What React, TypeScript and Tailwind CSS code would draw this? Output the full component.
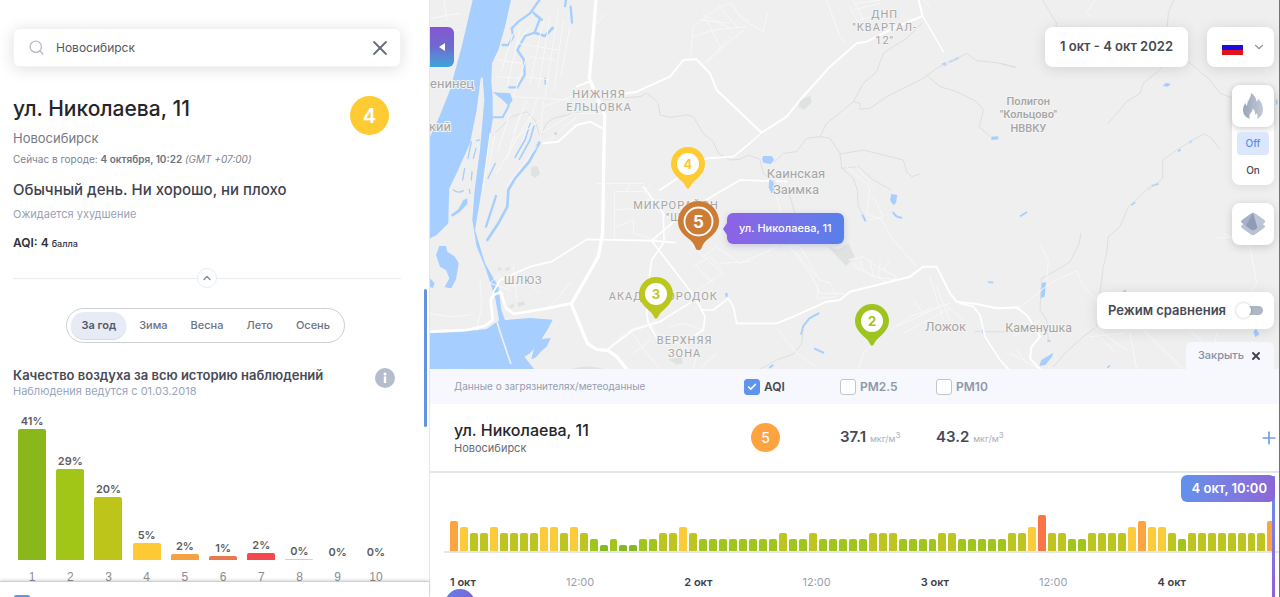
import React, { useState } from 'react';
import { Check, ChevronDown, ChevronUp, Plus, Search, X } from 'lucide-react';

const SEASONS = ['За год', 'Зима', 'Весна', 'Лето', 'Осень'];

const HISTORY = [
  { label: '41%', height: 131, color: 'bg-[#8ab81a]' },
  { label: '29%', height: 91, color: 'bg-[#a1c617]' },
  { label: '20%', height: 63, color: 'bg-[#bdc51a]' },
  { label: '5%', height: 17, color: 'bg-[#fdca36]' },
  { label: '2%', height: 6, color: 'bg-[#f6a244]' },
  { label: '1%', height: 4, color: 'bg-[#e87a50]' },
  { label: '2%', height: 7, color: 'bg-[#f2484e]' },
  { label: '0%', height: 1, color: 'bg-[#e0c4d0]' },
  { label: '0%', height: 0, color: 'bg-transparent' },
  { label: '0%', height: 0, color: 'bg-transparent' },
];

// hourly AQI, 1 окт 00:00 - 4 окт 10:00
const HOURLY = [
  5, 4, 3, 3, 4, 3, 3, 3, 3, 4, 4, 3, 4, 3, 2, 1, 2, 1, 1, 2, 2, 3, 3, 4,
  3, 2, 2, 2, 2, 2, 2, 2, 2, 3, 2, 2, 3, 2, 2, 2, 2, 2, 3, 3, 3, 2, 2, 2,
  2, 3, 3, 2, 2, 2, 2, 2, 3, 3, 4, 6, 3, 3, 2, 2, 3, 3, 3, 3, 4, 5, 4, 4,
  3, 2, 3, 3, 3, 3, 3, 3, 3, 3, 5,
];

const LEVELS: Record<number, string> = {
  1: 'h-[6px] bg-[#86b81f]',
  2: 'h-[12px] bg-[#a0c51c]',
  3: 'h-[18px] bg-[#bec520]',
  4: 'h-[24px] bg-[#fccb3a]',
  5: 'h-[30px] bg-[#fba441]',
  6: 'h-[36px] bg-[#f97548]',
};

const TIMES = ['1 окт', '12:00', '2 окт', '12:00', '3 окт', '12:00', '4 окт'];

const MapCanvas: React.FC = () => (
  <svg
    className="absolute inset-0 h-full w-full"
    viewBox="0 0 2547 1107"
    preserveAspectRatio="xMinYMin slice"
    fill="none"
    strokeLinecap="round"
    strokeLinejoin="round"
    aria-hidden="true"
  >
    {/* rivers and reservoir */}
    <g fill="#a6ceff">
      <path d="M128 0L243 0L225 80L205 150L186 190L184 245L188 290L188 360L172 450L155 570L135 690L165 790L205 860L214 930L232 980L210 975L195 890L165 800L140 740L127 660L134 570L150 450L163 300L158 232L152 235L140 330L120 430L80 520L58 565L56 620L55 670L20 705L0 715L0 410L28 350L60 270L95 140Z" />
      <path d="M0 1000L90 996L170 987L205 962L300 954L368 959L355 985L328 1028L300 1060L283 1070L312 1107L0 1107Z" />
      <path d="M330 1018L362 1014L350 1040L332 1055L318 1072L304 1078L312 1045Z" />
      <path d="M62 645L85 628L100 600L112 595L112 612L90 635L68 650Z" />
      <path d="M28 738L48 738L52 755L75 770L86 790L78 838L64 865L44 862L58 835L48 810L30 800L18 765Z" />
      <path d="M0 835L14 850L8 865L0 860Z" />
      <path d="M188 277L240 280L248 300L236 318L218 300Z" />
      <path d="M372 398L384 398L378 408Z" />
      <path d="M1000 468L1025 468L1033 480L1022 492L1000 488L996 476Z" />
      <path d="M1018 540L1030 542L1034 575L1024 580L1016 562Z" />
      <path d="M1384 582L1402 585L1398 608L1390 616L1380 600Z" />
      <path d="M1534 192L1545 187L1552 192L1544 199Z" />
      <path d="M1684 410L1704 409L1706 418L1684 420Z" />
      <path d="M1834 850L1848 846L1844 890L1830 895Z" />
      <path d="M1828 1098L1834 1080L1870 1058L1866 1070L1846 1095Z" />
      <path d="M2470 995L2478 985L2488 1003L2476 1012Z" />
      <path d="M2198 258L2208 248L2222 252L2214 260Z" />
      <path d="M885 880L893 878L893 890L887 891Z" />
    </g>
    <g stroke="#a6ceff">
      <path d="M328 0L300 40L265 65L245 85L250 110L235 135L218 135" strokeWidth="7" />
      <path d="M310 38L330 55L314 98L285 108L262 150L282 180L284 225L262 262L238 262" strokeWidth="7" />
      <path d="M314 98L345 108L368 84M318 46L336 60" strokeWidth="8" />
      <path d="M408 0L405 18M422 20L426 68" strokeWidth="7" />
      <path d="M236 318L218 352L190 352" strokeWidth="6" />
      <path d="M328 428L298 485L255 535L235 570L232 620L205 670L172 720" strokeWidth="8" />
      <path d="M345 235L346 252" strokeWidth="5" />
      <path d="M300 370L285 420L255 472M312 378L300 420L268 478" strokeWidth="5" />
      <path d="M124 425L114 475M138 445L130 475M104 505L98 540M126 515L124 540M196 490L174 535M140 422L148 420" strokeWidth="4" />
      <path d="M198 588L168 680" strokeWidth="7" />
      <path d="M70 570Q85 582 100 572M118 568L120 580" strokeWidth="4" />
      <path d="M1560 185L1568 182M1574 179L1584 174" strokeWidth="6" />
      <path d="M1390 638Q1398 652 1414 653M1298 646L1306 662" strokeWidth="6" />
      <path d="M1166 940L1138 955L1120 978L1114 1002M1154 1046L1180 1058M1020 1102L1028 1096" strokeWidth="6" />
      <path d="M1772 648L1790 637M1676 846L1688 848M1658 990L1660 998" strokeWidth="5" />
      <path d="M2168 557L2184 552M2246 453L2250 450M2280 427L2284 423M2106 614L2114 608M2540 300L2540 312" strokeWidth="5" />
      <path d="M2080 878L2086 872M2034 1102L2038 1098M1854 1022L1860 1024" strokeWidth="5" />
    </g>
    <g stroke="#efefef" strokeWidth="5">
      <path d="M196 950L215 1010L242 1090" />
    </g>

    {/* parks */}
    <g fill="#dfe3df">
      <path d="M305 500L322 498L330 522L315 534L302 524Z" />
      <path d="M1110 300L1140 288L1146 306L1122 330L1106 322Z" />
      <path d="M1194 740L1225 748L1255 730L1275 770L1248 798L1222 770Z" />
      <path d="M715 1078L755 1070L758 1090L740 1094Z" />
      <path d="M425 1107Q470 1092 522 1107Z" />
      <path d="M238 915l12-4 3 10-12 4zM262 908l20-4 3 10-20 6zM205 802l10 2-2 8-10-2zM225 805l14-4 2 6-12 6z" />
    </g>

    {/* creeks */}
    <g stroke="#dddfdf" strokeWidth="3">
      <path d="M520 300L560 295L630 290L650 280L665 290L685 310L690 345L720 352L770 345L790 350L820 400L850 425L865 460L900 480L930 478L955 465L990 478M1035 485L1060 460L1100 455L1130 415L1170 410L1190 370L1240 330L1270 305L1290 310L1290 328L1320 325L1370 290L1420 265L1480 235L1520 205L1570 180L1610 160L1640 182L1700 188L1755 200" />
      <path d="M1270 305L1300 250L1340 215L1360 160L1390 140L1430 115L1475 70" />
      <path d="M1490 225L1530 260L1580 275L1640 305L1660 330L1648 380L1680 410" />
      <path d="M1172 410L1200 415L1230 460L1235 505L1270 535L1282 570L1285 620L1300 645" />
      <path d="M1230 462L1300 450L1360 465L1420 480L1430 515L1445 530L1470 522M1235 505L1285 500L1330 540L1385 570" />
      <path d="M190 405L245 350L290 335L315 360L330 410L350 370L370 355L430 340L480 330" />
      <path d="M1838 0L1880 70L1875 90M2230 0L2215 40L2210 100L2195 205L2140 250L2130 280L2090 305L2035 370M2275 185L2340 240L2370 280L2410 295M1710 190L1755 203" />
      <path d="M2155 570L2198 535L2198 480L2240 450L2280 425L2320 402L2340 410L2370 448" />
      <path d="M2165 555L2095 620L2070 680L2035 710L2030 760L2020 800L2010 880L2000 980L1960 1010L1910 1055L1870 1100" />
      <path d="M1952 700L1948 730L1920 785L1890 805L1835 835L1830 930L1850 960L1855 1020" />
      <path d="M991 1107L1040 1080L1090 1062L1115 1030L1120 985M990 480L1000 520L1080 590L1095 640" />
      <path d="M1635 995L1800 996" />
    </g>

    {/* minor streets */}
    <g stroke="#f8f8f8" strokeWidth="3">
      <path d="M250 100L215 210M270 90L232 255M300 80L262 130M340 60L300 250M360 50L325 265M385 30L345 290M400 60L372 270M420 80L392 230M290 170L250 290M205 180L275 190M200 230L270 235M262 130L385 150M300 170L372 180M290 230L360 240M290 300L250 400M320 300L280 420M340 305L330 420M240 340L205 450M270 345L230 480M300 350L200 520M180 400L160 560M195 400L175 510M320 440L230 560" />
      <path d="M780 180L790 80L870 20L905 10L930 50L955 60M790 110L850 90L950 80M810 60L900 70M830 50L900 85M870 20L920 80M810 200L940 90M830 190L900 110M820 40L870 140M940 60L1000 95L1012 40" />
      <path d="M340 320L420 290L500 290M250 290L420 300M330 400L430 340L510 340M360 420L440 350M250 420L330 360M0 55L90 40M50 60L42 0M8 100L90 90M500 70L530 40" />
      <path d="M554 720L554 575L640 575L690 640L730 660L700 730M554 630L620 625L650 600L700 600M610 660L610 700L680 720M560 680L610 660M640 575L660 555M500 550L640 550M600 550L590 570" />
      <path d="M780 730L820 770L880 820M820 770L860 740M790 800L840 770L870 800M880 820L800 870M850 850L800 800M865 745L930 790L1000 760L1040 740M870 790L960 785" />
      <path d="M560 1020L600 990L650 1060L690 1107M600 990L660 970L680 960M660 970L720 1050M610 1060L660 1020M690 1000L800 1060L790 1107M810 1107L860 1060M720 980L760 970L820 990" />
      <path d="M300 840L200 830L180 850L240 870M250 800L260 900M230 860L300 850L330 880M360 920L420 850M150 840L155 920L140 990M0 940L60 950L120 945" />
      <path d="M1040 590L1080 740L1140 820L1170 880L1240 880M1060 740L1110 740L1170 840M1100 760L1160 830M1170 840L1200 850L1220 890L1160 895L1165 850" />
      <path d="M1256 780L1300 770L1340 800L1400 830L1380 850L1270 800M1270 790L1330 830L1400 840M1290 780L1300 810M1320 780L1330 830M1350 790L1345 830M1380 780L1360 810" />
      <path d="M1380 990L1440 950L1560 910M1400 980L1540 915M1420 1000L1560 925M1450 900L1480 940L1500 920M1520 860L1560 960M1500 830L1540 960M1530 900L1600 960" />
      <path d="M1190 0L1230 110L1250 130M1260 20L1290 80M1270 0L1300 60M1280 10L1350 0M1270 30L1350 10M1290 60L1360 40M1480 0L1500 20" />
      <path d="M1250 500L1320 560L1310 640L1355 660L1390 720L1460 800M1280 500L1330 560M1320 660L1360 650L1330 590" />
      <path d="M1760 930L1860 850L1940 812L1960 860L2000 900M1850 840L1855 780L1832 738M1990 980L2090 1050M2000 1000L2060 1060M1980 1010L2080 1000M2100 1000L2120 1107M2140 990L2260 1107M2270 980L2340 1050M2380 700L2460 740L2480 850L2460 880M2360 715L2420 710M2340 1107L2360 1000M1995 0L1970 40L1985 50" />
      <path d="M1040 985L1100 1060L1160 1100M1285 1107L1300 1060L1320 1040M1750 1010L1830 960M1740 1060L1830 1107M1760 1050L1790 1090" />
    </g>

    {/* roads */}
    <g stroke="#ffffff" strokeWidth="6">
      <path d="M498 0L490 100L478 235L500 290L524 345L520 560L518 700L505 770L424 912L472 1030L500 1048L535 1052L560 1070L590 1107" strokeWidth="10" />
      <path d="M0 995L110 990L165 978L188 960L182 900L190 885L212 876L228 925L252 942L350 925L424 910" strokeWidth="8" />
      <path d="M530 1050L610 990L690 965L700 960M188 880L210 840L300 800L365 785L470 718L665 722L780 872L810 920L825 950L820 990L790 1010" strokeWidth="5" />
      <path d="M665 722L735 728M665 722L760 640L930 540L1015 543M690 570L830 475L910 470L960 430M700 640L702 725M700 640L640 560" strokeWidth="5" />
      <path d="M700 730L665 780L658 830L650 940L655 970L690 1030M690 965L810 890M815 930L850 930L895 895L910 920L920 970L1040 970" strokeWidth="5" />
      <path d="M340 430L385 425L440 375L480 365L518 385M440 260L478 245" />
      <path d="M530 290L620 275L720 230L760 180L800 178L840 220L860 270L960 365L995 398L1070 350L1110 300L1200 200L1280 130L1310 125L1400 80L1478 48L1466 0" />
      <path d="M930 455L995 398M1478 48L1540 155" strokeWidth="4" />
      <path d="M1040 970L1090 950L1190 905L1230 900L1260 875L1440 830L1480 800L1520 800L1560 880L1580 905L1640 912L1700 925L1760 922L1790 945L1810 975L1830 1010L1805 1040L1800 1075L1830 1107" />
      <path d="M1590 910L1630 920L1650 945L1665 1010L1710 1080L1735 1107M1070 545L1040 543M1710 925L1765 922" strokeWidth="5" />
    </g>

    {/* place names */}
    <g
      fill="#a5a5a5"
      stroke="#f4f4f4"
      strokeWidth="6"
      paintOrder="stroke"
      textAnchor="middle"
      fontFamily="Roboto, sans-serif"
      fontSize="33"
    >
      <g letterSpacing="3">
        <text x="507" y="294">НИЖНЯЯ</text>
        <text x="507" y="332">ЕЛЬЦОВКА</text>
        <text x="738" y="626">МИКРОРАЙОН</text>
        <text x="738" y="664">"Щ"</text>
        <text x="280" y="852">ШЛЮЗ</text>
        <text x="700" y="900">АКАДЕМГОРОДОК</text>
        <text x="764" y="1032">ВЕРХНЯЯ</text>
        <text x="764" y="1070">ЗОНА</text>
        <text x="1364" y="55">ДНП</text>
        <text x="1364" y="93">"КВАРТАЛ-</text>
        <text x="1364" y="131">12"</text>
      </g>
      <g fontSize="39">
        <text x="66" y="265">енинец</text>
        <text x="30" y="394">кий</text>
        <text x="1098" y="533">Каинская</text>
        <text x="1098" y="581">Заимка</text>
        <text x="1547" y="993">Ложок</text>
        <text x="1826" y="995" fontSize="37">Каменушка</text>
      </g>
      <g fontSize="33" fontWeight="500">
        <text x="1795" y="314">Полигон</text>
        <text x="1795" y="355">"Кольцово"</text>
        <text x="1795" y="396">НВВКУ</text>
      </g>
    </g>
  </svg>
);

interface PinProps {
  value: number;
  color: string;
  position: string;
}

const Pin: React.FC<PinProps> = ({ value, color, position }) => (
  <button type="button" className={`absolute h-[42px] w-[34px] ${position} ${color}`}>
    <svg viewBox="0 0 34 42" className="absolute inset-0" aria-hidden="true">
      <path fill="currentColor" d="M17 0a17 17 0 0 1 17 17c0 8-6 13-11 17.500-2 1.800-3 3.500-4 5.500-1 2-3 2-4 0s-2-3.700-4-5.500C6 30 0 25 0 17A17 17 0 0 1 17 0Z" />
      <circle cx="17" cy="17" r="11" fill="#fff" />
    </svg>
    <span className="relative -top-1 block text-[13px] leading-[34px] font-bold">{value}</span>
  </button>
);

const SidePanel: React.FC = () => {
  const [season, setSeason] = useState(SEASONS[0]);
  const [query, setQuery] = useState('Новосибирск');

  return (
    <aside className="relative flex w-[430px] shrink-0 flex-col border-r border-[#e3e5ea] bg-white">
      <div className="min-h-0 flex-1 overflow-hidden pt-7 pr-7 pl-[13px]">
        <label className="flex h-[39px] items-center gap-[11px] rounded-md border border-[#f1f3f7] bg-white px-3.5 shadow-[0_2px_16px_rgba(0,0,0,0.13)]">
          <Search className="h-[17px] w-[17px] text-[#b9bdcb]" strokeWidth={2} />
          <input
            aria-label="Город"
            value={query}
            onChange={(e) => setQuery(e.target.value)}
            className="min-w-0 flex-1 text-[12px] text-[#535763] outline-none"
          />
          <button type="button" aria-label="Очистить" onClick={() => setQuery('')}>
            <X className="-mr-1.5 h-6 w-6 text-[#666c7c]" strokeWidth={1.8} />
          </button>
        </label>

        <div className="mt-7 flex items-start justify-between">
          <div>
            <h1 className="text-[21px] leading-7 font-medium text-[#25262a]">ул. Николаева, 11</h1>
            <p className="mt-[5px] text-[13px] leading-5 text-[#747985]">Новосибирск</p>
            <p className="mt-[3px] text-[10px] leading-4 text-[#7d8391]">
              Сейчас в городе: <b className="font-semibold text-[#6b7180]">4 октября, 10:22</b> <i>(GMT +07:00)</i>
            </p>
          </div>
          <span className="mt-px mr-3 flex h-[39px] w-[39px] items-center justify-center rounded-full bg-[#fecb33] text-[20px] font-semibold text-white">
            4
          </span>
        </div>

        <h2 className="mt-[13px] text-[15px] leading-5 font-medium text-[#3f434f]">Обычный день. Ни хорошо, ни плохо</h2>
        <p className="mt-1.5 text-[11px] leading-4 text-[#9aa2b6]">Ожидается ухудшение</p>
        <p className="mt-[13px] text-[12px] leading-4 font-semibold text-[#2f3138]">
          AQI: 4 <span className="text-[9px] font-medium">балла</span>
        </p>

        <div className="mt-4 flex items-center">
          <div className="h-px flex-1 bg-[#e8edf2]" />
          <button type="button" aria-label="Свернуть" className="flex h-5 w-5 items-center justify-center rounded-full border border-[#e8edf2]">
            <ChevronUp className="h-3 w-3 text-[#8b91a2]" strokeWidth={3} />
          </button>
          <div className="h-px flex-1 bg-[#e8edf2]" />
        </div>

        <div className="mt-5 mr-14 ml-auto flex h-[35px] w-fit items-center gap-[3px] rounded-full border border-[#cccfd5] px-1">
          {SEASONS.map((item) => (
            <button
              key={item}
              type="button"
              onClick={() => setSeason(item)}
              className={`h-[27px] rounded-full px-2.5 text-[11px] ${
                item === season ? 'bg-[#e7ebf5] font-semibold text-[#535968] shadow-[0_1px_1px_#d4d8e2]' : 'font-medium text-[#6c7383]'
              }`}
            >
              {item}
            </button>
          ))}
        </div>

        <div className="mt-6 flex items-start justify-between">
          <div>
            <h3 className="text-[13px] leading-4 font-semibold text-[#474b57]">Качество воздуха за всю историю наблюдений</h3>
            <p className="text-[11px] leading-4 text-[#9aa5ba]">Наблюдения ведутся с 01.03.2018</p>
          </div>
          <button type="button" aria-label="Информация" className="mt-px mr-1.5 h-5 w-5 rounded-full bg-[#b5bccb] text-white">
            <svg viewBox="0 0 20 20" fill="currentColor">
              <circle cx="10" cy="6" r="1.500" />
              <path d="M8.800 8.500h2.400V15H8.800Z" />
            </svg>
          </button>
        </div>

        <div className="mt-3.5 mr-1.5 grid grid-cols-10 text-center">
          {HISTORY.map((item, i) => (
            <div key={i}>
              <div className="flex h-[147px] flex-col items-center justify-end text-[11px] leading-4 font-semibold text-[#5b5d63]">
                {item.label}
                <div className={`w-7 rounded-t-xs ${item.color}`} style={{ height: item.height }} />
              </div>
              <div className="mt-[9px] font-['Liberation_Sans',sans-serif] text-[12px] leading-4 text-[#8b8d92]">{i + 1}</div>
            </div>
          ))}
        </div>
      </div>

      <div className="absolute top-[289px] right-[2px] h-[138px] w-[3px] rounded-full bg-[#6493e0]" />

      <div className="relative h-4 shrink-0 overflow-hidden border-t border-[#cfd0d2] bg-white pt-[13px] pl-3.5 shadow-[0_-1px_3px_rgba(0,0,0,0.15)]">
        <input type="checkbox" defaultChecked aria-label="Показывать на карте" className="block h-4 w-4 appearance-none rounded-xs bg-[#5f97e8]" />
      </div>
    </aside>
  );
};

const MapSection: React.FC = () => {
  const [fire, setFire] = useState('Off');

  return (
    <section className="relative min-h-0 flex-1 overflow-hidden bg-[#efefef]">
      <MapCanvas />

      <button
        type="button"
        aria-label="Скрыть панель"
        className="absolute top-[27px] left-0 flex h-10 w-6 items-center justify-center rounded-r-md bg-linear-to-b from-[#8655d2] via-[#6a6bd0] to-[#35a5d8]"
      >
        <svg viewBox="0 0 8 10" className="h-2.5 w-2 fill-white">
          <path d="M7 1v8L1 5Z" />
        </svg>
      </button>

      <Pin value={4} color="text-[#fecb33]" position="top-[147px] left-[241px]" />
      <Pin value={3} color="text-[#bcc71d]" position="top-[277px] left-[209px]" />
      <Pin value={2} color="text-[#9fc420]" position="top-[304px] left-[425px]" />
      <button type="button" className="absolute top-[201px] left-[248px] h-[50px] w-[41px]">
        <svg viewBox="0 0 41 50" className="absolute inset-0" aria-hidden="true">
          <path fill="#cd7c35" d="M20.500 0A20.500 20.500 0 0 1 41 20.500c0 8-5 13-11 17.500-3.500 2.500-5 5-6.500 9-1 3-5 3-6 0-1.500-4-3-6.500-6.500-9C5 33.500 0 28.500 0 20.500A20.500 20.500 0 0 1 20.500 0Z" />
          <circle cx="20.500" cy="20.500" r="14" fill="none" stroke="#fff" strokeWidth="1.800" />
        </svg>
        <span className="relative -top-1 block text-[17px] leading-[41px] font-bold text-white">5</span>
      </button>
      <div className="absolute top-[213px] left-[297px] flex h-[31px] items-center rounded-md bg-linear-to-r from-[#8c62e6] to-[#5680e9] px-3 text-[11px] font-medium text-white shadow-[0_2px_6px_rgba(80,90,180,0.25)]">
        <svg viewBox="0 0 4 12" className="absolute top-2.5 -left-1 h-3 w-1 fill-[#8c62e6]">
          <path d="M4 0v12L0 6Z" />
        </svg>
        ул. Николаева, 11
      </div>

      <div className="absolute top-[27px] right-[5px] flex flex-col items-end">
        <div className="flex gap-[19px]">
          <button type="button" className="h-10 rounded-lg bg-white px-[15px] text-[13px] font-semibold text-[#474a55] shadow-[0_2px_14px_rgba(0,0,0,0.12)]">
            1 окт - 4 окт 2022
          </button>
          <button type="button" aria-label="Русский" className="flex h-10 w-[67px] items-center justify-between rounded-lg bg-white pr-2 pl-[15px] shadow-[0_2px_14px_rgba(0,0,0,0.12)]">
            <svg viewBox="0 0 21 15" className="h-[15px] w-[21px]">
              <path fill="#f1f1f3" d="M0 0h21v1H0z" />
              <path fill="#1d0be0" d="M0 5h21v5H0z" />
              <path fill="#e0121c" d="M0 10h21v5H0z" />
            </svg>
            <ChevronDown className="h-3.5 w-3.5 text-[#9197a5]" />
          </button>
        </div>

        <div className="mt-[18px] w-[42px] rounded-lg bg-white shadow-[0_2px_10px_rgba(0,0,0,0.08)]">
          <button type="button" aria-label="Пожары" className="flex h-[42px] w-full items-center justify-center rounded-lg bg-white shadow-[0_2px_6px_rgba(0,0,0,0.2)]">
            <svg viewBox="0 0 20 26" className="h-[26px] w-5">
              <defs>
                <linearGradient id="flame" x1="0" y1="0" x2="1" y2="0">
                  <stop offset="0" stopColor="#98a5b9" />
                  <stop offset="1" stopColor="#c3cad6" />
                </linearGradient>
              </defs>
              <path
                fill="url(#flame)"
                d="M8 0c3 2 5.200 4.500 5.500 8.500C14.600 7.800 15 6.800 15 5.500 18 8 20 12 20 16.500c0 4.500-2.500 8-6.300 9.300 1-1.800 1.100-3.800.1-5.600-.4.900-1 1.300-1.700 1.500.3-2.700-.6-5-2.600-6.200.2 2.200-.6 3.200-1.700 4.300-1.500 1.600-1.800 3.700-.8 6C2.700 24.500 0 21.500 0 17c0-3 1-5 2.500-7 .2 1.300.7 2.200 1.500 2.900C4 8 8 5 8 0Z"
              />
            </svg>
          </button>
          <div className="flex flex-col gap-1 px-[5px] pt-[5px] pb-[3px]">
            {['Off', 'On'].map((item) => (
              <button
                key={item}
                type="button"
                onClick={() => setFire(item)}
                className={`h-[23px] rounded-sm text-[10px] font-medium ${item === fire ? 'bg-[#dbe7fd] text-[#5b8def]' : 'text-[#474a55]'}`}
              >
                {item}
              </button>
            ))}
          </div>
        </div>

        <button type="button" aria-label="Слои" className="mt-[18px] flex h-[42px] w-[42px] items-center justify-center rounded-lg bg-white shadow-[0_2px_8px_rgba(0,0,0,0.16)]">
          <svg viewBox="0 0 26 24" className="h-6 w-[26px]">
            <path fill="#b9c2d2" d="M2 13 13 6l11 7q2 1.500 0 3l-9 6.500q-2 1.500-4 0L2 16q-2-1.500 0-3Z" />
            <path fill="#a6b1c5" d="M2 8 11 1.500q2-1.500 4 0L24 8q2 1.500 0 3l-9 6.500q-2 1.500-4 0L2 11Q0 9.500 2 8Z" />
            <path fill="#8f9cb4" d="M6 13.800 13 1l4.500 14.700L15 17.500q-2 1.500-4 0Z" />
            <path fill="#bcc5d3" d="M13 .5q1 0 2 1L24 8q2 1.500 0 3l-6.500 4.700Z" />
          </svg>
        </button>

        <label className="mt-[47px] flex h-[37px] items-center gap-2.5 rounded-lg bg-white pr-[11px] pl-[11px] text-[13px] font-semibold text-[#474a55] shadow-[0_2px_14px_rgba(0,0,0,0.12)]">
          Режим сравнения
          <span className="relative flex h-4 w-[27px] items-center">
            <input
              type="checkbox"
              role="switch"
              className="peer absolute right-0 h-[9px] w-[22px] appearance-none rounded-full bg-[#afb7c5] checked:bg-[#6493e0]"
            />
            <span className="pointer-events-none relative h-[15px] w-[15px] rounded-full bg-white shadow-[0_0_3px_rgba(0,0,0,0.25)] peer-checked:ml-3" />
          </span>
        </label>
      </div>

      <button type="button" className="absolute right-[5px] bottom-0 flex h-[27px] items-center gap-1.5 rounded-t-md bg-[#f7f8fd] px-3 text-[11px] font-medium text-[#8990a3]">
        Закрыть
        <X className="h-3 w-3 text-[#43464f]" strokeWidth={4} />
      </button>
    </section>
  );
};

const POLLUTANTS = ['AQI', 'PM2.5', 'PM10'];

const DataPanel: React.FC = () => {
  const [checked, setChecked] = useState<string[]>(['AQI']);

  const toggle = (name: string) =>
    setChecked((prev) => (prev.includes(name) ? prev.filter((item) => item !== name) : [...prev, name]));

  return (
    <section className="shrink-0 bg-white">
      <table className="w-full table-fixed border-collapse text-left">
        <colgroup>
          <col className="w-[314px]" />
          <col className="w-24" />
          <col className="w-24" />
          <col className="w-32" />
          <col />
        </colgroup>
        <thead className="bg-[#f7f8fd]">
          <tr className="h-[35px]">
            <th className="pl-6 text-[10px] font-normal text-[#969db0]">Данные о загрязнителях/метеоданные</th>
            {POLLUTANTS.map((name) => (
              <th key={name}>
                <label className={`flex items-center gap-1 text-[12px] font-semibold ${checked.includes(name) ? 'text-[#474a55]' : 'text-[#8f97aa]'}`}>
                  <span className="relative flex">
                    <input
                      type="checkbox"
                      checked={checked.includes(name)}
                      onChange={() => toggle(name)}
                      className="h-4 w-4 appearance-none rounded-[3px] border border-[#c2c5cc] bg-white checked:border-[#5f94ee] checked:bg-[#5f94ee]"
                    />
                    {checked.includes(name) && (
                      <Check className="pointer-events-none absolute inset-[3px] h-2.5 w-2.5 text-white" strokeWidth={4} />
                    )}
                  </span>
                  {name}
                </label>
              </th>
            ))}
            <th />
          </tr>
        </thead>
        <tbody>
          <tr className="h-[68px] border-b-2 border-[#e6e7e9]">
            <td className="pl-6">
              <p className="text-[16px] leading-5 font-medium text-[#25262a]">ул. Николаева, 11</p>
              <p className="text-[11px] leading-4 text-[#676b75]">Новосибирск</p>
            </td>
            <td className="pl-[7px]">
              <span className="flex h-[29px] w-[29px] items-center justify-center rounded-full bg-[#fda440] text-[14px] font-medium text-white">5</span>
            </td>
            {['37.1', '43.2'].map((value) => (
              <td key={value} className="text-[15px] font-semibold whitespace-nowrap text-[#474a55]">
                {value}{' '}
                <span className="text-[9px] font-normal text-[#a9afbe]">
                  мкг/м<sup className="text-[8px]">3</sup>
                </span>
              </td>
            ))}
            <td>
              <button type="button" aria-label="Добавить" className="block w-full">
                <Plus className="ml-auto h-5 w-5 text-[#6d9fe3]" strokeWidth={2} />
              </button>
            </td>
          </tr>
        </tbody>
      </table>

      <div className="relative overflow-hidden">
        <div className="ml-3.5 flex h-[80px] items-end gap-[2px] border-b-2 border-[#e6e7ea] pr-1 pl-1.5">
          {HOURLY.map((value, i) => (
            <div key={i} className={`min-w-0 flex-1 rounded-t-xs ${LEVELS[value]}`} />
          ))}
        </div>
        <div className="mt-[21px] mb-[7px] flex justify-between pr-[93px] pl-5 text-[11px] leading-4">
          {TIMES.map((time, i) => (
            <span key={i} className={i % 2 ? 'text-[#9a9fad]' : 'font-semibold text-[#3d4049]'}>
              {time}
            </span>
          ))}
        </div>
        <button
          type="button"
          aria-label="Воспроизвести"
          className="absolute -bottom-[22px] left-[15px] h-[30px] w-[30px] rounded-full bg-linear-to-r from-[#6080e8] to-[#7a63d8]"
        />
        <div className="absolute top-[3px] right-1 bottom-0 w-[3px] bg-linear-to-b from-[#5f94ee] to-[#9060d8]" />
        <div className="absolute top-[2px] right-1 flex h-[27px] items-center rounded-md bg-linear-to-r from-[#6092ec] to-[#8c66d6] pr-2 pl-[11px] text-[13px] font-semibold text-white">
          4 окт, 10:00
        </div>
      </div>
    </section>
  );
};

const App: React.FC = () => (
  <div className="flex h-screen overflow-hidden bg-white font-['Inter','Open_Sans',sans-serif]">
    <SidePanel />
    <main className="flex min-w-0 flex-1 flex-col border-r border-[#6f7174]">
      <MapSection />
      <DataPanel />
    </main>
  </div>
);

export default App;
